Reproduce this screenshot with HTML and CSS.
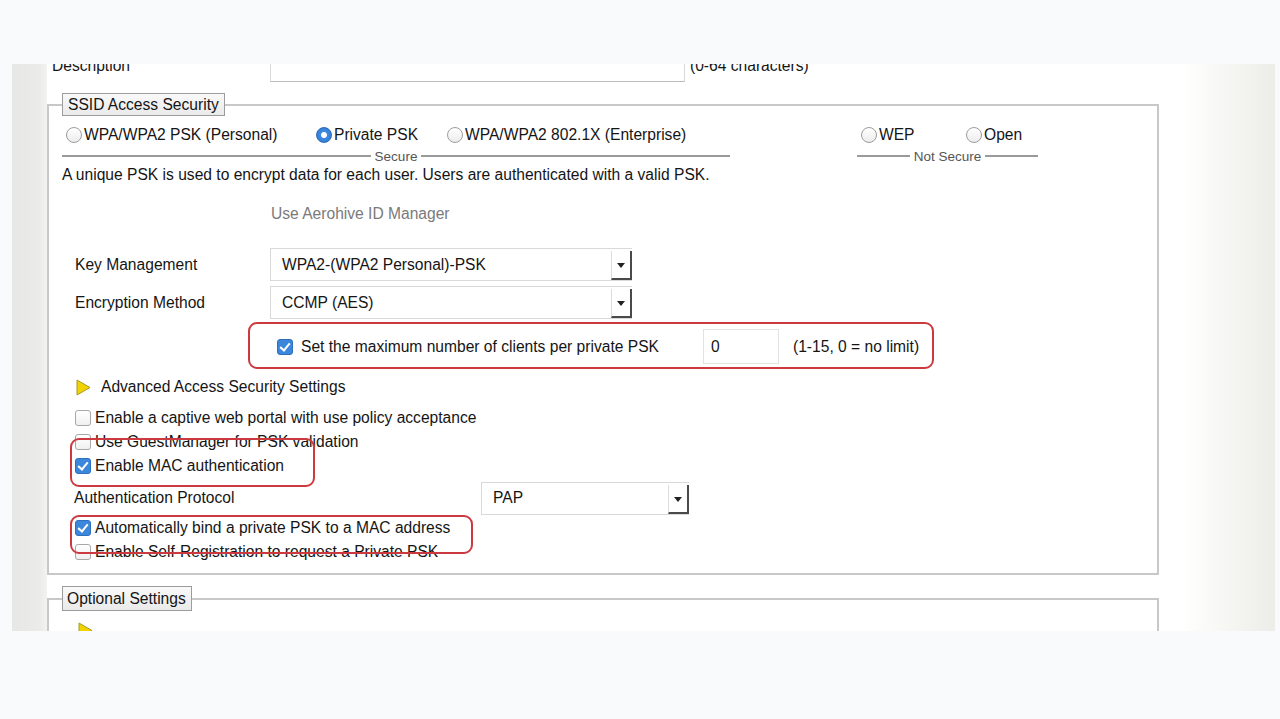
FILE: index.html
```html
<!DOCTYPE html>
<html lang="en">
<head>
    <meta charset="UTF-8">
    <title>SSID Access Security</title>
    <link rel="stylesheet" href="styles.css">
</head>
<body>
    <div class="shot">
        <div class="strip"></div>
        <div class="panel">
            <div class="desc-row">
                <span class="desc-label">Description</span>
                <div class="text-input desc-input"></div>
                <span class="hint">(0-64 characters)</span>
            </div>

            <fieldset class="group">
                <legend>SSID Access Security</legend>

                <div class="modes">
                    <div class="mode-set secure">
                        <div class="options">
                            <label class="opt"><span class="radio"></span>WPA/WPA2 PSK (Personal)</label>
                            <label class="opt"><span class="radio on"></span>Private PSK</label>
                            <label class="opt"><span class="radio"></span>WPA/WPA2 802.1X (Enterprise)</label>
                        </div>
                        <div class="set-caption"><span>Secure</span></div>
                    </div>
                    <div class="mode-set insecure">
                        <div class="options">
                            <label class="opt"><span class="radio"></span>WEP</label>
                            <label class="opt"><span class="radio"></span>Open</label>
                        </div>
                        <div class="set-caption"><span>Not Secure</span></div>
                    </div>
                </div>

                <div class="intro">A unique PSK is used to encrypt data for each user. Users are authenticated with a valid PSK.</div>
                <div class="idm">Use Aerohive ID Manager</div>

                <div class="field-row key-row">
                    <span class="label">Key Management</span>
                    <div class="select wide">
                        <span class="value">WPA2-(WPA2 Personal)-PSK</span>
                        <span class="arrow"></span>
                    </div>
                </div>
                <div class="field-row enc-row">
                    <span class="label">Encryption Method</span>
                    <div class="select wide">
                        <span class="value">CCMP (AES)</span>
                        <span class="arrow"></span>
                    </div>
                </div>

                <div class="max-clients">
                    <span class="check on"></span>
                    <span class="max-text">Set the maximum number of clients per private PSK</span>
                    <div class="text-input count-input">0</div>
                    <span class="range">(1-15, 0 = no limit)</span>
                </div>

                <div class="adv">
                    <svg width="15" height="17" viewBox="0 0 15 17"><polygon points="1,1 14,8.5 1,16" fill="#f2d300" stroke="#a59a2a" stroke-width="1"/></svg>
                    <span>Advanced Access Security Settings</span>
                </div>

                <div class="checks">
                    <div class="check-row"><span class="check"></span>Enable a captive web portal with use policy acceptance</div>
                    <div class="check-row"><span class="check"></span>Use GuestManager for PSK validation</div>
                    <div class="check-row"><span class="check on"></span>Enable MAC authentication</div>
                    <div class="auth-row">
                        <span class="label">Authentication Protocol</span>
                        <div class="select short">
                            <span class="value">PAP</span>
                            <span class="arrow"></span>
                        </div>
                    </div>
                    <div class="check-row"><span class="check on"></span>Automatically bind a private PSK to a MAC address</div>
                    <div class="check-row"><span class="check"></span>Enable Self-Registration to request a Private PSK</div>

                    <div class="mark mark-mac"></div>
                    <div class="mark mark-bind"></div>
                </div>
            </fieldset>

            <fieldset class="group optional">
                <legend>Optional Settings</legend>
                <svg class="opt-arrow" width="15" height="17" viewBox="0 0 15 17"><polygon points="1,1 14,8.5 1,16" fill="#f2d300" stroke="#a59a2a" stroke-width="1"/></svg>
            </fieldset>
        </div>
    </div>
</body>
</html>
```

FILE: styles.css
```css
body {
    margin: 0;
    background: #f9fafc;
    font-family: "Liberation Sans", Arial, sans-serif;
    font-size: 15.6px;
    color: #151515;
}

.shot {
    display: flex;
    margin: 64px 0 0 12px;
    width: 1263px;
    height: 567px;
    overflow: hidden;
}

.strip {
    width: 35px;
    flex-shrink: 0;
    background: linear-gradient(to right, #e7e7e5 0, #ebebe9 28px, #f3f3f1 35px);
}

.panel {
    flex: 1;
    background: linear-gradient(to right, #fff 0, #fff 1135px, #f2f2ee 1200px, #ececE8 100%);
}

/* description line, cut by the top edge */
.desc-row {
    display: flex;
    align-items: center;
    height: 33px;
    margin-top: -15px;
}

.desc-label {
    width: 218px;
    padding-left: 5px;
}

.text-input {
    box-sizing: border-box;
    background: #fff;
    border: 1px solid #d8d8d8;
    border-bottom-color: #bcbcbc;
}

.desc-input {
    width: 415px;
    height: 33px;
}

.hint {
    margin-left: 5px;
}

/* groups */
fieldset.group {
    box-sizing: border-box;
    width: 1112px;
    margin: 11px 0 0;
    padding: 0 13px 9px;
    border: 2px solid #c8c8c8;
}

legend {
    box-sizing: border-box;
    height: 23px;
    line-height: 21px;
    padding: 0 5px;
    border: 1px solid #9c9c9c;
    background: linear-gradient(#f9f9f9, #eaeaea);
}

/* security modes */
.modes {
    display: flex;
    margin-top: 8px;
}

.mode-set {
    display: flex;
    flex-direction: column;
}

.secure {
    width: 668px;
}

.insecure {
    width: 181px;
    margin-left: 127px;
}

.options {
    display: flex;
    align-items: center;
    height: 22px;
    padding-left: 4px;
}

.opt {
    display: flex;
    align-items: center;
}

.secure .opt:nth-child(1) { width: 250px; }
.secure .opt:nth-child(2) { width: 131px; }
.insecure .opt:nth-child(1) { width: 105px; }

.radio {
    box-sizing: border-box;
    width: 16px;
    height: 16px;
    margin-right: 2px;
    border-radius: 50%;
    border: 1px solid #9d9d9d;
    background: linear-gradient(#fff, #ececec);
}

.radio.on {
    border-color: #2b6cb8;
    background: radial-gradient(circle, #fff 0, #fff 2.5px, #3d8ae0 3.5px, #2f78cf 100%);
}

.set-caption {
    display: flex;
    align-items: center;
    height: 12px;
    margin-top: 4px;
    font-size: 13.5px;
    color: #555;
}

.set-caption::before,
.set-caption::after {
    content: "";
    flex: 1;
    border-top: 2px solid #9a9a9a;
}

.set-caption span {
    padding: 0 4px;
}

.intro {
    margin-top: 4px;
    line-height: 18px;
}

.idm {
    margin: 21px 0 0 209px;
    line-height: 18px;
    color: #7a7a7a;
}

/* selects */
.field-row {
    display: flex;
    align-items: center;
    margin-left: 13px;
}

.field-row .label {
    width: 195px;
}

.key-row {
    margin-top: 25px;
}

.enc-row {
    margin-top: 5px;
}

.select {
    box-sizing: border-box;
    display: flex;
    align-items: stretch;
    height: 33px;
    background: #fff;
    border: 1px solid #d9d9d9;
    border-right: none;
}

.select.wide {
    width: 362px;
}

.select.short {
    width: 208px;
}

.select .value {
    flex: 1;
    display: flex;
    align-items: center;
    padding-left: 11px;
}

.select .arrow {
    position: relative;
    width: 18px;
    margin: 2px 0 0;
    border-left: 1px solid #dcdcdc;
    border-right: 2px solid #4a4a4a;
    border-bottom: 2px solid #4a4a4a;
}

.select .arrow::after {
    content: "";
    position: absolute;
    left: 5px;
    top: 12px;
    border-left: 4px solid transparent;
    border-right: 4px solid transparent;
    border-top: 5px solid #222;
}

/* max clients, boxed in red */
.max-clients {
    box-sizing: border-box;
    display: flex;
    align-items: center;
    width: 686px;
    height: 47px;
    margin: 3px 0 0 186px;
    padding: 2px 0 0 27px;
    border: 2px solid #cc3a3f;
    border-radius: 9px;
}

.max-clients .check {
    margin-right: 8px;
}

.max-text {
    width: 402px;
}

.count-input {
    width: 76px;
    height: 35px;
    line-height: 33px;
    padding-left: 7px;
    border-color: #e2e2e2;
}

.range {
    margin-left: 14px;
}

.adv {
    display: flex;
    align-items: center;
    height: 18px;
    margin: 9px 0 0 14px;
}

.adv span {
    margin-left: 10px;
}

/* checkboxes */
.checks {
    position: relative;
    margin-top: 10px;
}

.check-row {
    display: flex;
    align-items: center;
    height: 24px;
    margin-left: 13px;
}

.check {
    position: relative;
    box-sizing: border-box;
    width: 16px;
    height: 16px;
    margin-right: 4px;
    flex-shrink: 0;
    border: 1px solid #a8a8a8;
    border-radius: 3px;
    background: linear-gradient(#fff, #f0f0f0);
}

.check.on {
    border-color: #2f6fbd;
    background: #3a87dc;
}

.check.on::after {
    content: "";
    position: absolute;
    left: 4px;
    top: 1px;
    width: 4px;
    height: 8px;
    border-right: 2px solid #fff;
    border-bottom: 2px solid #fff;
    transform: rotate(40deg);
}

.auth-row {
    display: flex;
    align-items: center;
    height: 32px;
    margin: 4px 0 2px 12px;
}

.auth-row .label {
    width: 407px;
}

.mark {
    position: absolute;
    left: 8px;
    box-sizing: border-box;
    border: 2px solid #cc3a3f;
    border-radius: 9px;
}

.mark-mac {
    top: 32px;
    width: 245px;
    height: 49px;
}

.mark-bind {
    top: 109px;
    width: 403px;
    height: 39px;
}

.optional {
    height: 120px;
    margin-top: 26px;
}

.optional legend {
    height: 25px;
    line-height: 23px;
    padding: 0 5px 0 4px;
}

.opt-arrow {
    display: block;
    margin: 11px 0 0 16px;
}
```
